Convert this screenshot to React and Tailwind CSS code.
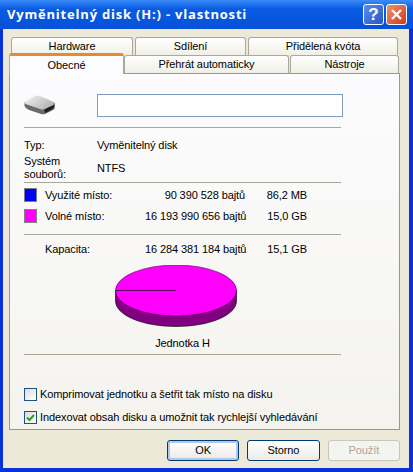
import React from "react";

const font = { fontFamily: '"Liberation Sans", Arial, sans-serif' };

const Tab = ({ label, className }) => (
  <div className={`flex items-center justify-center h-[18px] border border-b-0 border-[#aca899] rounded-t-[3px] bg-gradient-to-b from-[#ffffff] to-[#f0efe6] text-black ${className}`}>
    {label}
  </div>
);

const Divider = ({ className = "" }) => <div className={`h-px bg-[#aca899] ${className}`} />;

const SizeRow = ({ swatch, label, bytes, size, className = "" }) => (
  <div className={`flex items-center h-[14px] whitespace-nowrap ${className}`}>
    {swatch ? (
      <div className="w-[13px] h-[14px] border border-[#808080] shrink-0" style={{ background: swatch }} />
    ) : (
      <div className="w-[13px] shrink-0" />
    )}
    <span className="ml-[8px] w-[100px]">{label}</span>
    <span className="w-[100px] text-right">{bytes}</span>
    <span className="w-[62px] text-right">{size}</span>
  </div>
);

const Check = ({ checked, label, className = "" }) => (
  <div className={`flex items-center h-[13px] whitespace-nowrap ${className}`}>
    <div className="w-[13px] h-[13px] border border-[#1c5180] bg-gradient-to-br from-[#dcdcd7] to-[#ffffff] flex items-center justify-center shrink-0">
      {checked && (
        <svg width="9" height="9" viewBox="0 0 9 9">
          <path d="M1 4.5 L3.5 7 L8 2" fill="none" stroke="#21a121" strokeWidth="2" />
        </svg>
      )}
    </div>
    <span className="ml-[3px]">{label}</span>
  </div>
);

const Button = ({ label, disabled, primary, className = "" }) => (
  <div
    className={
      disabled
        ? `flex items-center justify-center w-[73px] h-[21px] border border-[#c9c7ba] rounded-[3px] bg-[#f4f4f0] text-[#aca899] ${className}`
        : primary
          ? `flex items-center justify-center w-[73px] h-[21px] border border-[#003c74] rounded-[3px] bg-gradient-to-b from-[#ffffff] to-[#ecebe5] shadow-[inset_0_0_0_2px_#b0c8ec] text-black ${className}`
          : `flex items-center justify-center w-[73px] h-[21px] border border-[#003c74] rounded-[3px] bg-gradient-to-b from-[#ffffff] to-[#ecebe5] text-black ${className}`
    }
  >
    {label}
  </div>
);

const DriveIcon = () => (
  <svg width="32" height="20" viewBox="0 0 32 20">
    <defs>
      <linearGradient id="driveTop" x1="0" y1="0" x2="1" y2="0.6">
        <stop offset="0" stopColor="#f4f4f4" />
        <stop offset="1" stopColor="#b4b4b4" />
      </linearGradient>
    </defs>
    <path d="M0.5 7 L0.5 11 Q1 13 5 15 L17 19 Q19 19.5 21 19 L29 15 Q31 14 31 11 L31 8 Z" fill="#6a6a6a" />
    <path d="M20 14 L30 10 L30 12 Q29.5 14 21 18 Z" fill="#1e1e1e" />
    <path d="M0.5 7 L11 1 Q13 0 16 1 L30 7 Q31.5 8.5 29 10 L21 14 Q19 15 16 14 L3 9.5 Q0 8.5 0.5 7 Z" fill="url(#driveTop)" />
  </svg>
);

const Pie = () => (
  <svg width="122" height="62" viewBox="0 0 122 62">
    <path d="M0.5 25.5 L0.5 36 C0.5 50 27 61.5 61 61.5 C95 61.5 121.5 50 121.5 36 L121.5 25.5 Z" fill="#800080" stroke="#000000" strokeWidth="0.6" />
    <ellipse cx="61" cy="25.5" rx="60.5" ry="25.5" fill="#ff00ff" stroke="#4a004a" strokeWidth="0.6" />
    <line x1="0.5" y1="25.5" x2="61" y2="25.5" stroke="#600060" strokeWidth="1" />
  </svg>
);

export default function App() {
  return (
    <div style={font} className="w-[413px] h-[472px] flex flex-col overflow-hidden bg-[#0831d9] text-[11px] leading-[13px] tracking-[-0.1px] text-black">
      {/* title bar */}
      <div className="h-[29px] flex items-center shrink-0 pl-[7px] pr-[6px] bg-gradient-to-b from-[#3a8cf8] via-[#0a5ce4] via-30% to-[#0650d8]">
        <span style={{ fontFamily: '"Open Sans", sans-serif' }} className="text-white font-bold text-[13px] tracking-[0.8px] flex-1">
          Vyměnitelný disk (H:) - vlastnosti
        </span>
        <div className="w-[21px] h-[21px] rounded-[3px] border border-white bg-gradient-to-br from-[#5a8cf0] to-[#2a56c8] flex items-center justify-center text-white font-bold text-[17px]">?</div>
        <div className="ml-[2px] w-[21px] h-[21px] rounded-[3px] border border-white bg-gradient-to-br from-[#f09070] to-[#c83818] flex items-center justify-center">
          <svg width="13" height="13" viewBox="0 0 13 13">
            <path d="M2 2 L11 11 M11 2 L2 11" stroke="#ffffff" strokeWidth="2.4" />
          </svg>
        </div>
      </div>

      {/* dialog body */}
      <div className="flex-1 ml-[3px] mr-[4px] mb-[4px] bg-[#ece9d8] pl-[6px] pr-[9px] pt-[8px] flex flex-col">
        <div className="flex pl-[2px] gap-[2px]">
          <Tab label="Hardware" className="w-[122px]" />
          <Tab label="Sdílení" className="w-[111px]" />
          <Tab label="Přidělená kvóta" className="w-[150px]" />
        </div>
        <div className="flex items-end h-[18px]">
          <div className="relative z-10 w-[115px] h-[21px] -mb-[1px] flex items-center justify-center border-x border-[#aca899] border-t-[3px] border-t-[#e68b2c] rounded-t-[3px] bg-[#fcfcfe]">
            Obecné
          </div>
          <Tab label="Přehrát automaticky" className="w-[165px]" />
          <Tab label="Nástroje" className="ml-[1px] w-[109px]" />
        </div>

        {/* general page */}
        <div className="w-[391px] h-[357px] border border-[#919b9c] bg-gradient-to-b from-[#fcfcfe] to-[#f4f3ee] pl-[14px] pr-[58px] flex flex-col">
          <div className="flex items-center mt-[19px] h-[24px] -mr-[2px]">
            <div className="w-[73px]"><DriveIcon /></div>
            <div className="w-[246px] h-[23px] border border-[#7f9db9] bg-white" />
          </div>
          <Divider className="mt-[10px]" />
          <div className="flex items-center mt-[10px] h-[14px]">
            <span className="w-[73px]">Typ:</span>
            <span>Vyměnitelný disk</span>
          </div>
          <div className="flex items-center mt-[2px] h-[28px]">
            <span className="w-[73px]">Systém souborů:</span>
            <span>NTFS</span>
          </div>
          <Divider />
          <SizeRow swatch="#0000ff" label="Využité místo:" bytes="90 390 528 bajtů" size="86,2 MB" className="mt-[5px]" />
          <SizeRow swatch="#ff00ff" label="Volné místo:" bytes="16 193 990 656 bajtů" size="15,0 GB" className="mt-[7px]" />
          <Divider className="mt-[11px]" />
          <SizeRow label="Kapacita:" bytes="16 284 381 184 bajtů" size="15,1 GB" className="mt-[7px]" />
          <div className="flex justify-center mt-[9px] pr-[13px]"><Pie /></div>
          <div className="text-center mt-[9px] h-[14px] leading-[14px]">Jednotka H</div>
          <Divider className="mt-[4px]" />
          <Check label="Komprimovat jednotku a šetřit tak místo na disku" className="mt-[33px]" />
          <Check checked label="Indexovat obsah disku a umožnit tak rychlejší vyhledávání" className="mt-[10px]" />
        </div>

        {/* dialog buttons */}
        <div className="flex mt-[10px] pl-[158px] gap-[8px]">
          <Button label="OK" primary />
          <Button label="Storno" />
          <Button label="Použít" disabled />
        </div>
      </div>
    </div>
  );
}
